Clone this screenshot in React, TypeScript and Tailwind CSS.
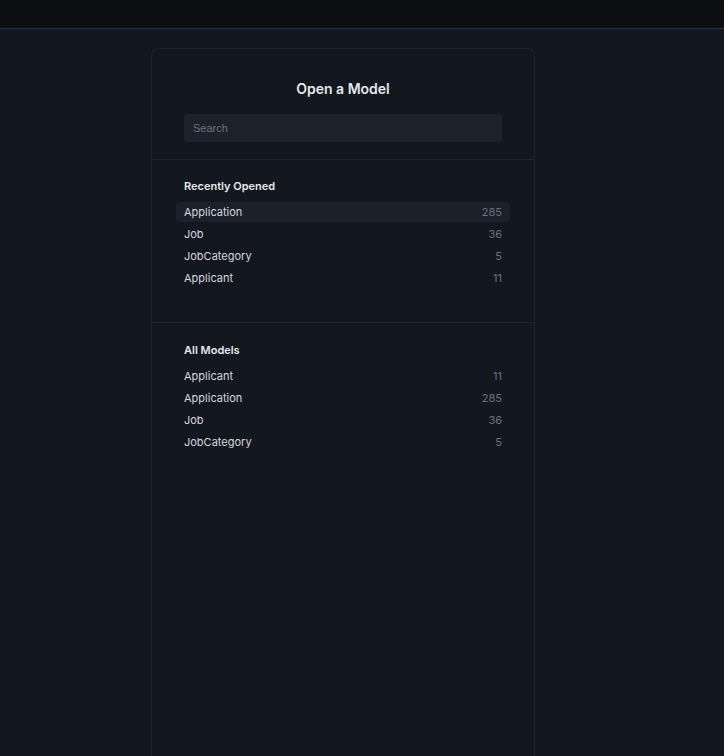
import React from "react";

const recent = [
  { name: "Application", count: 285 },
  { name: "Job", count: 36 },
  { name: "JobCategory", count: 5 },
  { name: "Applicant", count: 11 },
];

const all = [
  { name: "Applicant", count: 11 },
  { name: "Application", count: 285 },
  { name: "Job", count: 36 },
  { name: "JobCategory", count: 5 },
];

function ModelList({
  title,
  items,
  active,
  className = "",
}: {
  title: string;
  items: { name: string; count: number }[];
  active?: number;
  className?: string;
}) {
  return (
    <div className={`px-[24px] ${className}`}>
      <h2 className="px-2 text-[11px] leading-[14px] font-semibold text-[#e5e7eb]">{title}</h2>
      <ul className="mt-[9px] flex flex-col gap-[2px]">
        {items.map((m, i) => (
          <li
            key={m.name}
            className={`flex h-[20px] items-center justify-between rounded px-2 text-[11px] ${
              i === active ? "bg-[#1c202b]" : ""
            }`}
          >
            <span className="text-[#d4d7dd]">{m.name}</span>
            <span className="text-[#6b7280]">{m.count}</span>
          </li>
        ))}
      </ul>
    </div>
  );
}

export default function App() {
  return (
    <div
      className="flex h-[756px] flex-col overflow-hidden bg-[#131720]"
      style={{ fontFamily: "Inter, 'Noto Sans', sans-serif" }}
    >
      <div className="h-[29px] shrink-0 border-b border-[#2a3343] bg-[#0c0e12]" />
      <div className="flex flex-1 justify-center pt-[19px] pr-[38px]">
        <div className="flex w-[384px] flex-col rounded-t-lg border border-b-0 border-[#1e2330] bg-[#131720]">
          <div className="flex flex-col items-center border-b border-[#1e2330] px-[32px] pt-[31px] pb-[17px]">
            <h1 className="text-[14px] leading-[18px] font-semibold text-[#e5e7eb]">Open a Model</h1>
            <div className="mt-[16px] flex h-[28px] w-full items-center rounded bg-[#1c212c] px-[9px]">
              <span
                className="text-[11px] text-[#6b7280]"
                style={{ fontFamily: "'Liberation Sans', Arial, sans-serif" }}
              >
                Search
              </span>
            </div>
          </div>
          <div className="h-[163px] border-b border-[#1e2330]">
            <ModelList title="Recently Opened" items={recent} active={0} className="pt-[19px]" />
          </div>
          <ModelList title="All Models" items={all} className="pt-[20px]" />
        </div>
      </div>
    </div>
  );
}
